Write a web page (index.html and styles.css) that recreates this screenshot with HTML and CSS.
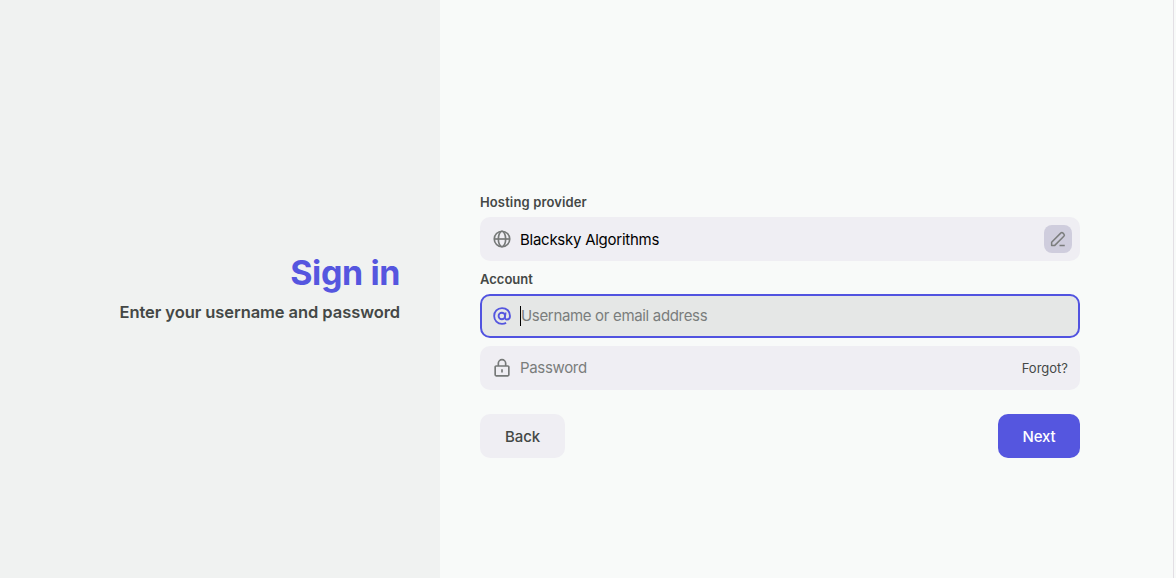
FILE: index.html
```html
<!DOCTYPE html>
<html lang="en">
<head>
<meta charset="utf-8">
<title>Sign in</title>
<link rel="stylesheet" href="styles.css">
</head>
<body>
<div class="page">
  <aside class="intro">
    <h1 class="title"><span>Sign in</span></h1>
    <p class="subtitle"><span>Enter your username and password</span></p>
  </aside>
  <main class="content">
    <form class="form">
      <div class="label hosting"><span>Hosting provider</span></div>
      <div class="field provider">
        <svg class="icon" viewBox="0 0 24 24"><circle cx="12" cy="12" r="9.3"/><ellipse cx="12" cy="12" rx="4.4" ry="9.3"/><path d="M2.7 12h18.6"/></svg>
        <span class="value">Blacksky Algorithms</span>
        <span class="edit"><svg class="pencil" viewBox="0 0 24 24"><path d="M3.5 20.5v-4.2L15.6 4.2a2.2 2.2 0 0 1 3.1 0l1.1 1.1a2.2 2.2 0 0 1 0 3.1L7.7 20.5H3.5zM14 20.5h7"/></svg></span>
      </div>
      <div class="label account"><span>Account</span></div>
      <div class="field focused">
        <svg class="icon" viewBox="0 0 24 24"><circle cx="11.8" cy="12" r="3.9"/><path d="M16.3 7.8l-.7 5.3c-.3 2.1.8 3.1 2.3 3.1 2.5 0 3.7-1.8 3.7-4.2C21.6 6.2 17.6 2.6 12 2.6S2.6 6.8 2.6 12s4 9.4 9.4 9.4c1.9 0 3.5-.4 4.9-1.2"/></svg>
        <span class="placeholder username">Username or email address</span>
      </div>
      <div class="field password">
        <svg class="icon" viewBox="0 0 24 24"><path d="M5 9.6h14a1.2 1.2 0 0 1 1.2 1.2v9.4a1.2 1.2 0 0 1-1.2 1.2H5a1.2 1.2 0 0 1-1.2-1.2v-9.4A1.2 1.2 0 0 1 5 9.6zM7.6 9.3V6.4a4.4 4.4 0 0 1 8.8 0v2.9M12 13.4v4"/></svg>
        <span class="placeholder pass">Password</span>
        <span class="forgot">Forgot?</span>
      </div>
      <div class="actions">
        <button type="button" class="button back"><span>Back</span></button>
        <button type="button" class="button next"><span>Next</span></button>
      </div>
    </form>
  </main>
</div>
</body>
</html>
```
FILE: styles.css
```css
* { box-sizing: border-box; }
body { margin: 0; background: #f8faf9; font-family: Inter, sans-serif; color: #444846; }
.page { display: flex; width: 1174px; height: 578px; overflow: hidden; border-right: 1px solid #e3dfe5; }
.intro { width: 440px; padding: 252px 40px 0 0; background: #f0f2f1; text-align: right; }
.title { margin: 0; color: #5556df; font-size: 34px; line-height: 41px; font-weight: 700; letter-spacing: -.4px; }
.subtitle { margin: 7px 0 0; font-size: 16.5px; line-height: 24px; font-weight: 600; letter-spacing: -.07px; white-space: nowrap; }
.content { padding: 194px 0 0 40px; }
.form { width: 600px; }
.label { height: 23px; font-size: 13px; line-height: 17px; font-weight: 600; }
.hosting { letter-spacing: .13px; }
.account { margin-top: 10px; }
.field { display: flex; align-items: center; height: 44px; padding: 0 12px; border-radius: 10px; background: #efeef3; font-size: 15px; line-height: 20px; }
.provider { padding-right: 8px; }
.value { padding-top: 2px; color: #000; letter-spacing: -.26px; }
.icon { width: 20px; height: 20px; margin-right: 8px; fill: none; stroke: #767978; stroke-width: 2; stroke-linejoin: round; }
.edit { display: flex; width: 28px; height: 28px; margin-left: auto; align-items: center; justify-content: center; border-radius: 8px; background: #cfcddd; }
.pencil { width: 18px; height: 18px; fill: none; stroke: #7b7d7d; stroke-width: 2; stroke-linejoin: round; }
.focused { padding: 0 10px; border: 2px solid #5153e0; background: #e5e7e6; }
.focused .icon { stroke: #5556df; stroke-width: 2.2; }
.placeholder { color: #7a7d7c; letter-spacing: -.33px; }
.username { border-left: 1px solid #000; }
.password { margin-top: 8px; }
.forgot { margin-left: auto; font-size: 13px; }
.actions { display: flex; justify-content: space-between; margin-top: 24px; }
.button { height: 44px; padding: 2px 0 0; border: 0; border-radius: 10px; font: 500 15px/20px Inter, sans-serif; letter-spacing: -.15px; }
.back { width: 85px; color: #444846; background: #efeef3; }
.next { width: 82px; color: #fff; background: #5556df; }
```
